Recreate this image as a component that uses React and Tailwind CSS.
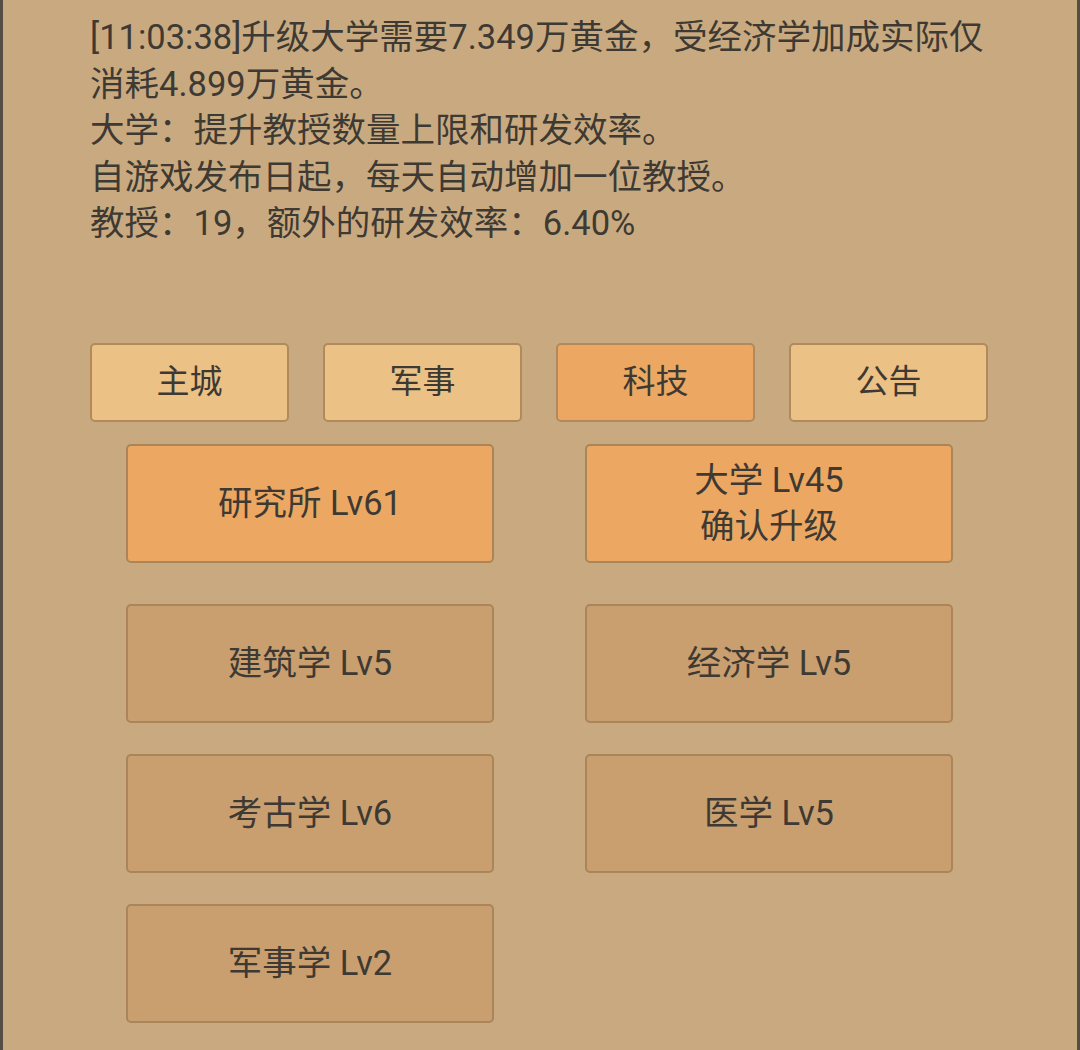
const log = [
  "[11:03:38]升级大学需要7.349万黄金，受经济学加成实际仅消耗4.899万黄金。",
  "大学：提升教授数量上限和研发效率。",
  "自游戏发布日起，每天自动增加一位教授。",
  "教授：19，额外的研发效率：6.40%",
];

const tabs = [
  { name: "主城", active: false },
  { name: "军事", active: false },
  { name: "科技", active: true },
  { name: "公告", active: false },
];

function Building({ children, active }) {
  return (
    <button
      className={
        "flex h-[119px] w-[368px] flex-col items-center justify-center rounded-[5px] border-2 border-[#a98559] leading-[46px] text-[#3e3a33] " +
        (active ? "bg-[#eca862]" : "bg-[#c99f6f]")
      }
    >
      {children}
    </button>
  );
}

export default function App() {
  return (
    <div
      className="min-h-[1050px] w-[1080px] border-x-[3px] border-[#544d46] bg-[#c9aa80] text-[34.5px] text-[#3e3a33]"
      style={{ fontFamily: 'Roboto, "Noto Sans CJK SC", sans-serif' }}
    >
      <div className="pl-[87px] pr-[84px] pt-[14px] leading-[46.5px]">
        {log.map((line) => (
          <p key={line}>{line}</p>
        ))}
      </div>

      <div className="mt-[96px] flex gap-[34px] pl-[87px] text-[33px]">
        {tabs.map((t) => (
          <button
            key={t.name}
            className={
              "flex h-[79px] w-[199px] items-center justify-center rounded-[5px] border-2 border-[#b08a5b] " +
              (t.active ? "bg-[#eca862]" : "bg-[#ecc185]")
            }
          >
            {t.name}
          </button>
        ))}
      </div>

      <div className="flex flex-col pl-[123px]">
        <div className="mt-[22px] flex gap-[91px]">
          <Building active>研究所 Lv61</Building>
          <Building active>
            <span>大学 Lv45</span>
            <span>确认升级</span>
          </Building>
        </div>
        <div className="mt-[41px] flex gap-[91px]">
          <Building>建筑学 Lv5</Building>
          <Building>经济学 Lv5</Building>
        </div>
        <div className="mt-[31px] flex gap-[91px]">
          <Building>考古学 Lv6</Building>
          <Building>医学 Lv5</Building>
        </div>
        <div className="mt-[31px] flex gap-[91px]">
          <Building>军事学 Lv2</Building>
        </div>
      </div>
    </div>
  );
}
